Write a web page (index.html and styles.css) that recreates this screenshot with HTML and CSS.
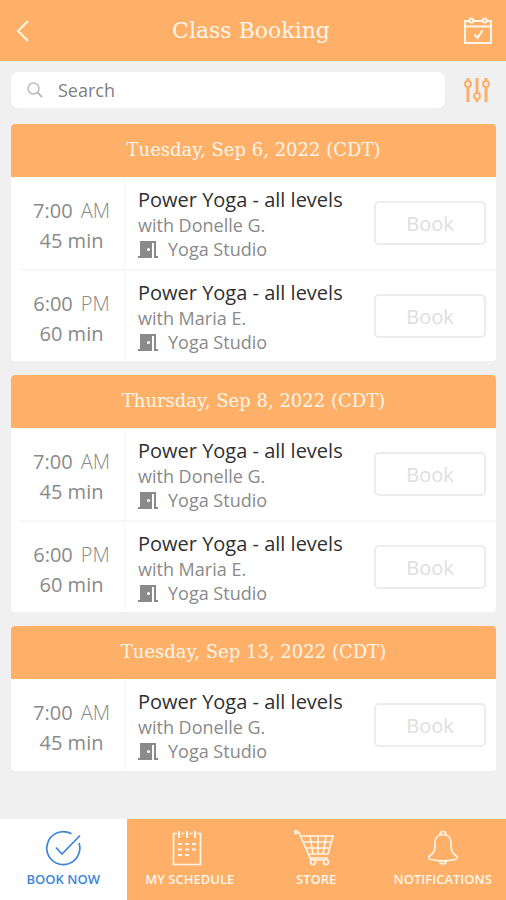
FILE: index.html
```html
<!DOCTYPE html>
<html lang="en">
<head>
<meta charset="utf-8">
<meta name="viewport" content="width=device-width, initial-scale=1">
<title>Class Booking</title>
<link rel="stylesheet" href="styles.css">
</head>
<body>
<svg class="sprite" aria-hidden="true">
  <symbol id="door" viewBox="0 0 20 19">
    <path d="M2 1h12v17H0v-2h2z" fill="currentColor"/>
    <path d="M12 2h5v15h3" fill="none" stroke="currentColor" stroke-width="2"/>
    <circle cx="10.500" cy="9.500" r="1.500" fill="#fff"/>
  </symbol>
</svg>
<header class="topbar">
  <button class="icon-button" aria-label="Back">
    <svg width="28" height="28" viewBox="0 0 28 28"><path d="M18 4 8 14l10 10"/></svg>
  </button>
  <h1>Class Booking</h1>
  <button class="icon-button" aria-label="My calendar">
    <svg width="28" height="28" viewBox="0 0 28 28">
      <path d="M5 4H1v22h26V4H23M9.500 4h9M1 9.500h26M10.500 17.500l3 3.500 5-8"/>
      <circle cx="7.300" cy="3.500" r="2"/><circle cx="20.700" cy="3.500" r="2"/>
    </svg>
  </button>
</header>
<main>
  <form class="search-row" role="search">
    <label class="search-box">
      <svg width="16" height="16" viewBox="0 0 16 16"><circle cx="6.500" cy="6.500" r="5.500"/><path d="m10.500 10.500 4.500 4.500" class="handle"/></svg>
      <input type="search" placeholder="Search" aria-label="Search">
    </label>
    <button type="button" class="filter" aria-label="Filters">
      <svg width="26" height="26" viewBox="0 0 26 26">
        <path d="M4 1v3M4 10v15M13 1v15M13 22v3M22 1v3M22 10v15" class="rail"/>
        <circle cx="4" cy="7" r="3"/><circle cx="13" cy="19" r="3"/><circle cx="22" cy="7" r="3"/>
      </svg>
    </button>
  </form>

  <section class="day">
    <h2>Tuesday, Sep 6, 2022 (CDT)</h2>
    <ul>
      <li class="session">
        <div class="time"><span>7:00<span class="period">AM</span></span><span>45 min</span></div>
        <div class="details"><h3>Power Yoga - all levels</h3><p>with Donelle G.</p><p class="room"><svg><use href="#door"/></svg>Yoga Studio</p></div>
        <button class="book" disabled>Book</button>
      </li>
      <li class="session">
        <div class="time"><span>6:00<span class="period">PM</span></span><span>60 min</span></div>
        <div class="details"><h3>Power Yoga - all levels</h3><p>with Maria E.</p><p class="room"><svg><use href="#door"/></svg>Yoga Studio</p></div>
        <button class="book" disabled>Book</button>
      </li>
    </ul>
  </section>

  <section class="day">
    <h2>Thursday, Sep 8, 2022 (CDT)</h2>
    <ul>
      <li class="session">
        <div class="time"><span>7:00<span class="period">AM</span></span><span>45 min</span></div>
        <div class="details"><h3>Power Yoga - all levels</h3><p>with Donelle G.</p><p class="room"><svg><use href="#door"/></svg>Yoga Studio</p></div>
        <button class="book" disabled>Book</button>
      </li>
      <li class="session">
        <div class="time"><span>6:00<span class="period">PM</span></span><span>60 min</span></div>
        <div class="details"><h3>Power Yoga - all levels</h3><p>with Maria E.</p><p class="room"><svg><use href="#door"/></svg>Yoga Studio</p></div>
        <button class="book" disabled>Book</button>
      </li>
    </ul>
  </section>

  <section class="day">
    <h2>Tuesday, Sep 13, 2022 (CDT)</h2>
    <ul>
      <li class="session">
        <div class="time"><span>7:00<span class="period">AM</span></span><span>45 min</span></div>
        <div class="details"><h3>Power Yoga - all levels</h3><p>with Donelle G.</p><p class="room"><svg><use href="#door"/></svg>Yoga Studio</p></div>
        <button class="book" disabled>Book</button>
      </li>
    </ul>
  </section>
</main>
<nav class="tabs">
  <a href="#book" class="active" aria-current="page">
    <svg width="36" height="36" viewBox="0 0 36 36"><path d="M26.500 3.800A16.500 16.500 0 1 0 34 13M11 17.500l6 6.500L35 5.500"/></svg>
    Book now
  </a>
  <a href="#schedule">
    <svg width="36" height="36" viewBox="0 0 36 36">
      <path d="M5 3.500H1.500v31h27v-31H25M9.500 3.500h3M17.500 3.500h3"/>
      <path d="M7 1v7M15 1v7M23 1v7M6 14h4M13 14h4M20 14h4M6 19.500h4M13 19.500h4M20 19.500h4M6 25h4M13 25h4" class="bold"/>
    </svg>
    My schedule
  </a>
  <a href="#store">
    <svg width="44" height="36" viewBox="0 0 44 36">
      <circle cx="2" cy="2" r="1.500"/>
      <path d="M3.500 2.500H5L17 30M7 6h32l-5 18H14.500M10 12h27M12.500 18h23M16 6l3 18M24 6v18M32 6l-3 18M21 30h8M17 28h17"/>
      <circle cx="19" cy="32" r="2.500"/><circle cx="32" cy="32" r="2.500"/>
    </svg>
    Store
  </a>
  <a href="#notifications">
    <svg width="36" height="36" viewBox="0 0 36 36">
      <path d="M15 4.500a3 3 0 0 1 6 0M18 4.500c-5 0-8 3.500-8 8.500 0 8-1 10-5.500 13-1.500 1-.5 3 1.500 3.500 7 1.500 17 1.500 24 0 2-.5 3-2.500 1.500-3.500-4.500-3-5.500-5-5.500-13 0-5-3-8.500-8-8.500zM14.500 30.500a3.500 3.500 0 0 0 7 0"/>
    </svg>
    Notifications
  </a>
</nav>
</body>
</html>
```
FILE: styles.css
```css
* { box-sizing: border-box; }
body {
  margin: 0;
  min-height: 100vh;
  display: flex;
  flex-direction: column;
  background: #f0f0f0;
  color: #8a8a8a;
  font-family: "Open Sans", "Noto Sans", sans-serif;
}
h1, h2, h3, p, ul { margin: 0; padding: 0; }
ul { list-style: none; }
button { font: inherit; padding: 0; background: none; border: 0; }
svg { fill: none; stroke: currentColor; stroke-width: 2; }
.sprite { display: none; }

.topbar {
  display: flex;
  align-items: center;
  justify-content: space-between;
  padding: 15px 14px 14px;
  background: #feb069;
  color: #fff5e8;
}
.topbar h1 {
  font: 400 22px/32px "DejaVu Serif", serif;
}
.icon-button { display: flex; color: inherit; }
.icon-button:first-child { margin-left: -4px; }
.icon-button svg { stroke-width: 2; }

main { flex: 1; padding: 11px 10px 24px 11px; }
.search-row { display: flex; align-items: center; gap: 19px; padding-right: 6px; }
.search-box {
  flex: 1;
  display: flex;
  align-items: center;
  gap: 15px;
  height: 36px;
  padding: 0 16px;
  border-radius: 7px;
  background: #fff;
  color: #bcbcbc;
}
.search-box svg { stroke-width: 1.5; }
.search-box .handle { stroke-width: 2; }
.search-box input {
  flex: 1;
  min-width: 0;
  padding: 0;
  border: 0;
  outline: 0;
  background: none;
  font: 400 18px/24px "Open Sans", sans-serif;
}
.search-box input::placeholder { color: #808080; opacity: 1; }
.filter { display: flex; color: #fbb16d; }
.filter .rail { stroke-width: 3; }

.day {
  margin-top: 14px;
  overflow: hidden;
  border-radius: 4px;
  background: #fff;
}
.search-row + .day { margin-top: 16px; }
.day h2 {
  padding: 14px 0 15px;
  background: #feb069;
  color: #fff5e8;
  text-align: center;
  font: 400 18px/24px "DejaVu Serif", serif;
}
.session {
  display: flex;
  align-items: center;
  height: 92px;
  padding-right: 10px;
  margin-left: 10px;
}
.session + .session { border-top: 2px solid #f5f6f6; }
.time {
  align-self: stretch;
  width: 104px;
  display: flex;
  flex-direction: column;
  justify-content: center;
  align-items: center;
  padding: 5px 2px 0 0;
  border-right: 1px solid #f5f6f6;
  font-size: 20px;
  line-height: 30px;
}
.period { margin-left: 8px; font-weight: 300; }
.details { flex: 1; padding: 2px 0 0 13px; font-size: 18px; line-height: 24px; }
.details h3 { font-size: 20px; font-weight: 400; line-height: 26px; color: #303030; }
.room { display: flex; align-items: center; gap: 10px; }
.room svg { width: 20px; height: 19px; stroke: none; }
.book {
  width: 112px;
  height: 44px;
  border: 2px solid #ececec;
  border-radius: 5px;
  color: #dedede;
  font-size: 20px;
}

.tabs {
  position: sticky;
  bottom: 0;
  display: grid;
  grid-template-columns: repeat(4, 1fr);
  background: #feb069;
}
.tabs a {
  display: flex;
  flex-direction: column;
  align-items: center;
  gap: 3px;
  padding: 11px 0;
  color: #fff5e8;
  font-size: 13px;
  font-weight: 600;
  line-height: 20px;
  text-decoration: none;
  text-transform: uppercase;
}
.tabs a.active { background: #fff; color: #3d85d6; }
.tabs svg { stroke-width: 1.7; }
.tabs .bold { stroke-width: 2; }
```
